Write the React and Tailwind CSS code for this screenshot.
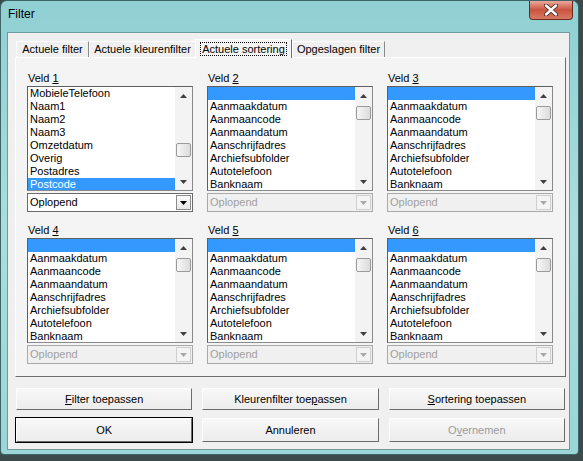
import React from 'react';

const FONT = "font-['Liberation_Sans',Arial,sans-serif]";

const list1 = ['MobieleTelefoon', 'Naam1', 'Naam2', 'Naam3', 'Omzetdatum', 'Overig', 'Postadres', 'Postcode'];
const listRest = ['', 'Aanmaakdatum', 'Aanmaancode', 'Aanmaandatum', 'Aanschrijfadres', 'Archiefsubfolder', 'Autotelefoon', 'Banknaam'];

const Arrow = ({ up, color = '#404040' }) => (
  <svg width="7" height="4" viewBox="0 0 7 4">
    <path d={up ? 'M0 4 L3.5 0 L7 4 Z' : 'M0 0 L7 0 L3.5 4 Z'} fill={color} />
  </svg>
);

// small win7 style scrollbar (arrows without visible button)
const ScrollBar = ({ low }) => (
  <div className="w-[17px] flex flex-col bg-[#f3f3f3]">
    <div className="h-[17px] flex items-center justify-center">
      <Arrow up />
    </div>
    <div className="flex-1 flex flex-col">
      <div className={`${low ? 'mt-[39px]' : 'mt-[2px]'} mx-[1px] h-[14px] border border-[#9a9a9a] rounded-[2px] bg-gradient-to-r from-[#f6f6f6] to-[#dcdcdc]`} />
    </div>
    <div className="h-[17px] flex items-center justify-center">
      <Arrow />
    </div>
  </div>
);

const ListBox = ({ items, selected, low }) => (
  <div className="flex h-[105px] border border-t-[#5f5f5f] border-l-[#5f5f5f] border-r-[#8a8a8a] border-b-[#8a8a8a] bg-white">
    <div className="flex-1 flex flex-col overflow-hidden">
      {items.map((it, i) => (
        <div
          key={i}
          className={`h-[13px] shrink-0 leading-[13px] pl-[2px] text-[11px] whitespace-nowrap ${i === selected ? 'bg-[#3399ff] text-white' : 'text-black'}`}
        >
          {it}
        </div>
      ))}
    </div>
    <ScrollBar low={low} />
  </div>
);

const Combo = ({ disabled }) => (
  <div className={`flex h-[19px] border ${disabled ? 'border-[#a9a9a9] bg-[#f0f0f0]' : 'border-[#6a6a6a] bg-white'}`}>
    <div className={`flex-1 pl-[2px] text-[11px] leading-[17px] ${disabled ? 'text-[#a0a0a0]' : 'text-black'}`}>Oplopend</div>
    <div className={`w-[15px] m-[1px] flex items-center justify-center border ${disabled ? 'border-[#cfcfcf] bg-[#f4f4f4]' : 'border-[#8a8a8a] bg-gradient-to-b from-[#fbfbfb] to-[#e6e6e6]'}`}>
      <Arrow color={disabled ? '#a8a8a8' : '#000000'} />
    </div>
  </div>
);

const Field = ({ n, items, selected, low, disabled }) => (
  <div className="flex flex-col">
    <div className="h-[14px] pl-[1px] text-[11px] leading-[14px] text-black">
      Veld <span className="underline">{n}</span>
    </div>
    <div className="mt-[1px]">
      <ListBox items={items} selected={selected} low={low} />
    </div>
    <div className="mt-[2px]">
      <Combo disabled={disabled} />
    </div>
  </div>
);

const Tab = ({ children, w, active }) =>
  active ? (
    <div className={`${w} h-[19px] -mb-[1px] -ml-[1px] flex items-start justify-center pt-[2px] bg-[#f4f4f4] border-l border-t border-l-white border-t-white border-r border-r-[#6d6d6d] relative z-10`}>
      <span className="border border-dotted border-black px-[1px] leading-[12px] text-[11px]">{children}</span>
    </div>
  ) : (
    <div className={`${w} h-[16px] flex items-center justify-center text-[11px] border-l border-t border-l-white border-t-white border-r border-r-[#8a8a8a]`}>
      {children}
    </div>
  );

const Btn = ({ children, def, disabled }) => (
  <div className={`flex-1 ${def ? 'border border-black' : 'border border-transparent'}`}>
    <div className={`h-full flex items-center justify-center text-[11px] border border-t-[#fdfdfd] border-l-[#fdfdfd] border-r-[#6b6b6b] border-b-[#6b6b6b] bg-gradient-to-b from-[#f8f8f8] to-[#ececec] ${disabled ? 'text-[#9a9a9a]' : 'text-black'}`}>
      {children}
    </div>
  </div>
);

export default function App() {
  return (
    <div className={`w-[583px] h-[461px] overflow-hidden bg-[#3d4a4b] ${FONT}`}>
      <div className="w-[579px] h-[455px] rounded-t-[7px] rounded-b-[4px] border border-[#3f6568] bg-gradient-to-b from-[#8fd0d3] via-[#a9dedd] to-[#9ad6d7] flex flex-col">
        {/* title bar */}
        <div className="h-[31px] flex items-start">
          <div className="pl-[7px] pt-[6px] text-[12px] leading-[15px] text-black">Filter</div>
          <div className="ml-auto mr-[5px] w-[44px] h-[19px] rounded-b-[4px] border border-t-0 border-[#6b2a1f] bg-gradient-to-b from-[#e9a99b] via-[#c9533e] to-[#d97a64] flex items-center justify-center">
            <svg width="14" height="12" viewBox="0 0 14 12">
              <path d="M2 1.5 L12 10.5 M12 1.5 L2 10.5" stroke="#4a2a24" strokeWidth="4.2" strokeLinecap="round" />
              <path d="M2 1.5 L12 10.5 M12 1.5 L2 10.5" stroke="#ffffff" strokeWidth="2.4" strokeLinecap="round" />
            </svg>
          </div>
        </div>

        {/* client area */}
        <div className="ml-[6px] mr-[8px] mb-[4px] flex-1 border border-[#6f9a9c] bg-[#f0f0f0] pl-[7px] pr-[3px] pt-[7px] flex flex-col text-black">
          {/* tabs */}
          <div className="h-[17px] flex items-end pl-[1px]">
            <Tab w="w-[73px]">Actuele filter</Tab>
            <Tab w="w-[107px]">Actuele kleurenfilter</Tab>
            <Tab w="w-[97px]" active>Actuele sortering</Tab>
            <Tab w="w-[93px]">Opgeslagen filter</Tab>
          </div>

          {/* tab page */}
          <div className="h-[320px] border border-t-white border-l-white border-r-[#6d6d6d] border-b-[#6d6d6d] bg-[#f4f4f4] pt-[13px] pl-[11px] pr-[12px]">
            <div className="grid grid-cols-3 gap-x-[14px] gap-y-[11px]">
              <Field n="1" items={list1} selected={7} low />
              <Field n="2" items={listRest} selected={0} disabled />
              <Field n="3" items={listRest} selected={0} disabled />
              <Field n="4" items={listRest} selected={0} disabled />
              <Field n="5" items={listRest} selected={0} disabled />
              <Field n="6" items={listRest} selected={0} disabled />
            </div>
          </div>

          {/* buttons */}
          <div className="mt-[10px] h-[24px] flex gap-[8px]">
            <Btn><span><span className="underline">F</span>ilter toepassen</span></Btn>
            <Btn><span>Kleurenfilter toe<span className="underline">p</span>assen</span></Btn>
            <Btn><span><span className="underline">S</span>ortering toepassen</span></Btn>
          </div>
          <div className="mt-[6px] h-[26px] flex gap-[8px]">
            <Btn def>OK</Btn>
            <Btn>Annuleren</Btn>
            <Btn disabled><span>O<span className="underline">v</span>ernemen</span></Btn>
          </div>
        </div>
      </div>
    </div>
  );
}
